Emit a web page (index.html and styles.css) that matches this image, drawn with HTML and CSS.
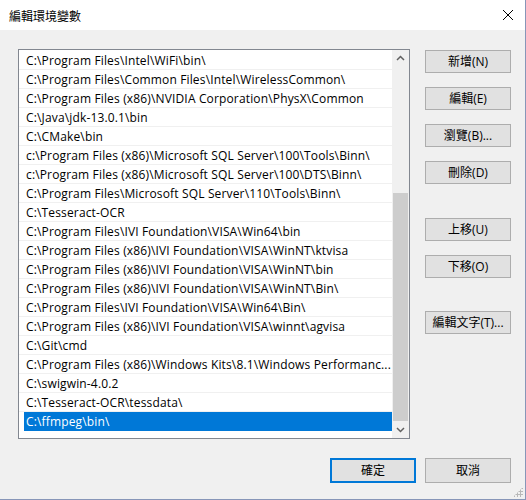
FILE: index.html
```html
<!DOCTYPE html>
<html lang="zh-Hant">
<head>
    <meta charset="UTF-8">
    <title>編輯環境變數</title>
    <link rel="stylesheet" href="styles.css">
</head>
<body>
    <div class="window">
        <div class="titlebar">
            <div class="caption">編輯環境變數</div>
            <svg class="close" width="12" height="12" viewBox="0 0 12 12">
                <path d="M1 1 L11 11 M11 1 L1 11" stroke="#000" stroke-width="1" fill="none"/>
            </svg>
        </div>
        <div class="content">
            <div class="main">
                <div class="listbox">
                    <div class="rows">
                        <div class="row"><span class="cell">C:\Program Files\Intel\WiFi\bin\</span></div>
                        <div class="row"><span class="cell">C:\Program Files\Common Files\Intel\WirelessCommon\</span></div>
                        <div class="row"><span class="cell">C:\Program Files (x86)\NVIDIA Corporation\PhysX\Common</span></div>
                        <div class="row"><span class="cell">C:\Java\jdk-13.0.1\bin</span></div>
                        <div class="row"><span class="cell">C:\CMake\bin</span></div>
                        <div class="row"><span class="cell">c:\Program Files (x86)\Microsoft SQL Server\100\Tools\Binn\</span></div>
                        <div class="row"><span class="cell">c:\Program Files (x86)\Microsoft SQL Server\100\DTS\Binn\</span></div>
                        <div class="row"><span class="cell">C:\Program Files\Microsoft SQL Server\110\Tools\Binn\</span></div>
                        <div class="row"><span class="cell">C:\Tesseract-OCR</span></div>
                        <div class="row"><span class="cell">C:\Program Files\IVI Foundation\VISA\Win64\bin</span></div>
                        <div class="row"><span class="cell">C:\Program Files (x86)\IVI Foundation\VISA\WinNT\ktvisa</span></div>
                        <div class="row"><span class="cell">C:\Program Files (x86)\IVI Foundation\VISA\WinNT\bin</span></div>
                        <div class="row"><span class="cell">C:\Program Files (x86)\IVI Foundation\VISA\WinNT\Bin\</span></div>
                        <div class="row"><span class="cell">C:\Program Files\IVI Foundation\VISA\Win64\Bin\</span></div>
                        <div class="row"><span class="cell">C:\Program Files (x86)\IVI Foundation\VISA\winnt\agvisa</span></div>
                        <div class="row"><span class="cell">C:\Git\cmd</span></div>
                        <div class="row"><span class="cell">C:\Program Files (x86)\Windows Kits\8.1\Windows Performanc...</span></div>
                        <div class="row"><span class="cell">C:\swigwin-4.0.2</span></div>
                        <div class="row"><span class="cell">C:\Tesseract-OCR\tessdata\</span></div>
                        <div class="row selected"><span class="cell">C:\ffmpeg\bin\</span></div>
                    </div>
                    <div class="scrollbar">
                        <svg class="arrow" width="17" height="17" viewBox="0 0 17 17">
                            <path d="M5 10 L8.5 6.5 L12 10" stroke="#606060" stroke-width="1.5" fill="none"/>
                        </svg>
                        <div class="track">
                            <div class="thumb"></div>
                        </div>
                        <svg class="arrow" width="17" height="17" viewBox="0 0 17 17">
                            <path d="M5 7 L8.5 10.5 L12 7" stroke="#606060" stroke-width="1.5" fill="none"/>
                        </svg>
                    </div>
                </div>
                <div class="side">
                    <button class="btn">新增(N)</button>
                    <button class="btn">編輯(E)</button>
                    <button class="btn">瀏覽(B)...</button>
                    <button class="btn">刪除(D)</button>
                    <button class="btn gap">上移(U)</button>
                    <button class="btn">下移(O)</button>
                    <button class="btn gap2">編輯文字(T)...</button>
                </div>
            </div>
            <div class="footer">
                <button class="btn default">確定</button>
                <button class="btn">取消</button>
            </div>
        </div>
        <div class="grip"></div>
    </div>
</body>
</html>
```

FILE: styles.css
```css
* {
    box-sizing: border-box;
}
body {
    margin: 0;
    font-family: "Open Sans", "Noto Sans CJK TC", sans-serif;
    font-size: 12px;
    color: #000;
}
.window {
    width: 526px;
    height: 500px;
    background: #f0f0f0;
    border-right: 1px solid #8796b8;
    border-bottom: 1px solid #8796b8;
    display: flex;
    flex-direction: column;
    position: relative;
}
.titlebar {
    height: 30px;
    background: #fff;
    display: flex;
    align-items: center;
    justify-content: space-between;
    padding: 0 11px 0 9px;
}
.caption {
    font-family: "Noto Sans CJK TC", sans-serif;
    font-size: 12px;
}
.content {
    padding: 19px 14px 0 18px;
    flex: 1;
    display: flex;
    flex-direction: column;
}
.main {
    display: flex;
    gap: 15px;
}
.listbox {
    width: 392px;
    height: 390px;
    border: 1px solid #828790;
    background: #fff;
    display: flex;
}
.rows {
    flex: 1;
    padding-top: 1px;
}
.row {
    height: 19px;
    border-bottom: 1px solid #f0f0f0;
    padding-left: 5px;
    display: flex;
}
.cell {
    flex: 1;
    padding-left: 2px;
    line-height: 19px;
    letter-spacing: 0.15px;
    white-space: nowrap;
    overflow: hidden;
}
.selected {
    border-bottom-color: #fff;
}
.selected .cell {
    background: #0078d7;
    color: #fff;
    height: 19px;
}
.scrollbar {
    width: 17px;
    background: #f0f0f0;
    display: flex;
    flex-direction: column;
}
.arrow {
    display: block;
}
.track {
    flex: 1;
    display: flex;
    flex-direction: column;
    justify-content: flex-end;
}
.thumb {
    height: 228px;
    margin: 0 1px;
    background: #cdcdcd;
}
.side {
    display: flex;
    flex-direction: column;
    gap: 14px;
    padding-top: 1px;
}
.btn {
    width: 86px;
    height: 23px;
    background: #e1e1e1;
    border: 1px solid #adadad;
    font-family: "Open Sans", "Noto Sans CJK TC", sans-serif;
    font-size: 12px;
    color: #000;
    padding: 0 0 1px;
}
.gap {
    margin-top: 20px;
}
.gap2 {
    margin-top: 19px;
}
.footer {
    display: flex;
    justify-content: flex-end;
    gap: 9px;
    margin-top: 19px;
}
.footer .btn {
    height: 25px;
}
.default {
    border: 2px solid #0078d7;
}
.grip {
    position: absolute;
    right: 2px;
    bottom: 2px;
    width: 10px;
    height: 10px;
    background-image: radial-gradient(circle, #b8b8b8 1px, transparent 1.2px);
    background-size: 3px 3px;
    clip-path: polygon(100% 0, 100% 100%, 0 100%);
}
```
